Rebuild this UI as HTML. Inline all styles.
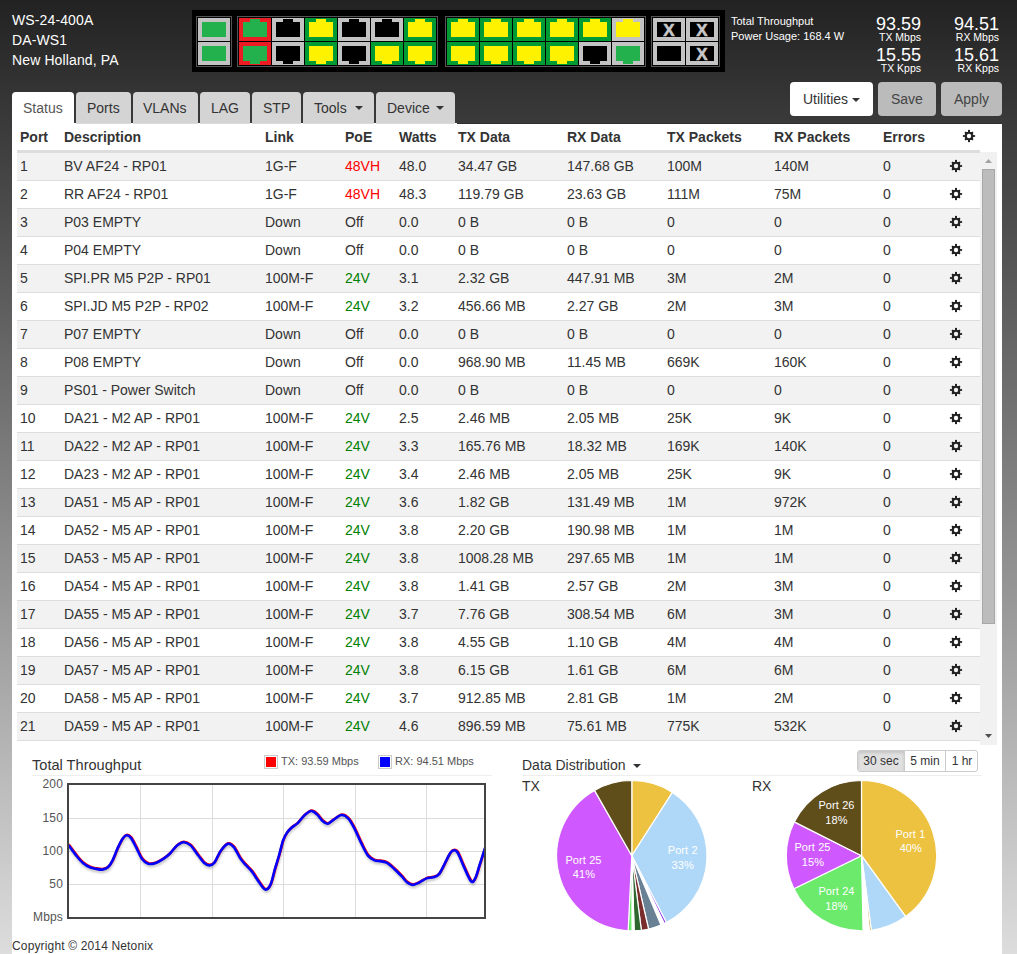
<!DOCTYPE html><html><head><meta charset="utf-8"><style>
html,body{margin:0;padding:0}
body{width:1017px;height:954px;overflow:hidden;position:relative;background:linear-gradient(#222 0%,#dddddd 100%);font-family:'Liberation Sans', sans-serif;}
.abs{position:absolute}
.th{position:absolute;font:bold 14px/20px 'Liberation Sans', sans-serif;color:#333;white-space:nowrap}
.td{position:absolute;font:14px/20px 'Liberation Sans', sans-serif;color:#333;white-space:nowrap}
.tab{position:absolute;top:92px;height:31px;background:#d4d4d4;border-radius:4px 4px 0 0;font:14px/20px 'Liberation Sans', sans-serif;color:#333;box-sizing:border-box;padding-top:6px;white-space:nowrap}
.btn{position:absolute;top:82px;height:34px;border-radius:4px;font:14px/20px 'Liberation Sans', sans-serif;box-sizing:border-box;padding-top:7px;white-space:nowrap}
</style></head><body>
<div class="abs" style="left:12px;top:10px;font:14px/20px 'Liberation Sans', sans-serif;color:#fff;letter-spacing:0.12px">WS-24-400A<br>DA-WS1<br>New Holland, PA</div><div style="position:absolute;left:192px;top:10px;width:533px;height:62px;background:#000"></div><div style="position:absolute;left:196px;top:16px;width:34px;height:49px;border:1px solid #555"></div><div style="position:absolute;left:237px;top:16px;width:199px;height:49px;border:1px solid #555"></div><div style="position:absolute;left:445px;top:16px;width:199px;height:49px;border:1px solid #555"></div><div style="position:absolute;left:651px;top:16px;width:67px;height:49px;border:1px solid #555"></div><div style="position:absolute;left:198px;top:18px;width:32px;height:23px;background:#c3c3c3"></div><div style="position:absolute;left:202px;top:22px;width:24px;height:15px;background:#22b14c"></div><div style="position:absolute;left:198px;top:42px;width:32px;height:23px;background:#c3c3c3"></div><div style="position:absolute;left:202px;top:46px;width:24px;height:15px;background:#22b14c"></div><div style="position:absolute;left:239px;top:18px;width:32px;height:23px;background:#ed1c24"></div><div style="position:absolute;left:243px;top:22px;width:24px;height:15px;background:#22b14c"></div><div style="position:absolute;left:250px;top:19px;width:10px;height:3px;background:#22b14c"></div><div style="position:absolute;left:239px;top:42px;width:32px;height:23px;background:#ed1c24"></div><div style="position:absolute;left:243px;top:46px;width:24px;height:15px;background:#22b14c"></div><div style="position:absolute;left:250px;top:61px;width:10px;height:3px;background:#22b14c"></div><div style="position:absolute;left:447px;top:18px;width:32px;height:23px;background:#009a34"></div><div style="position:absolute;left:451px;top:22px;width:24px;height:15px;background:#fff200"></div><div style="position:absolute;left:458px;top:19px;width:10px;height:3px;background:#fff200"></div><div style="position:absolute;left:447px;top:42px;width:32px;height:23px;background:#009a34"></div><div style="position:absolute;left:451px;top:46px;width:24px;height:15px;background:#fff200"></div><div style="position:absolute;left:458px;top:61px;width:10px;height:3px;background:#fff200"></div><div style="position:absolute;left:272px;top:18px;width:32px;height:23px;background:#c3c3c3"></div><div style="position:absolute;left:276px;top:22px;width:24px;height:15px;background:#000"></div><div style="position:absolute;left:283px;top:19px;width:10px;height:3px;background:#000"></div><div style="position:absolute;left:272px;top:42px;width:32px;height:23px;background:#c3c3c3"></div><div style="position:absolute;left:276px;top:46px;width:24px;height:15px;background:#000"></div><div style="position:absolute;left:283px;top:61px;width:10px;height:3px;background:#000"></div><div style="position:absolute;left:480px;top:18px;width:32px;height:23px;background:#009a34"></div><div style="position:absolute;left:484px;top:22px;width:24px;height:15px;background:#fff200"></div><div style="position:absolute;left:491px;top:19px;width:10px;height:3px;background:#fff200"></div><div style="position:absolute;left:480px;top:42px;width:32px;height:23px;background:#009a34"></div><div style="position:absolute;left:484px;top:46px;width:24px;height:15px;background:#fff200"></div><div style="position:absolute;left:491px;top:61px;width:10px;height:3px;background:#fff200"></div><div style="position:absolute;left:305px;top:18px;width:32px;height:23px;background:#009a34"></div><div style="position:absolute;left:309px;top:22px;width:24px;height:15px;background:#fff200"></div><div style="position:absolute;left:316px;top:19px;width:10px;height:3px;background:#fff200"></div><div style="position:absolute;left:305px;top:42px;width:32px;height:23px;background:#009a34"></div><div style="position:absolute;left:309px;top:46px;width:24px;height:15px;background:#fff200"></div><div style="position:absolute;left:316px;top:61px;width:10px;height:3px;background:#fff200"></div><div style="position:absolute;left:513px;top:18px;width:32px;height:23px;background:#009a34"></div><div style="position:absolute;left:517px;top:22px;width:24px;height:15px;background:#fff200"></div><div style="position:absolute;left:524px;top:19px;width:10px;height:3px;background:#fff200"></div><div style="position:absolute;left:513px;top:42px;width:32px;height:23px;background:#009a34"></div><div style="position:absolute;left:517px;top:46px;width:24px;height:15px;background:#fff200"></div><div style="position:absolute;left:524px;top:61px;width:10px;height:3px;background:#fff200"></div><div style="position:absolute;left:338px;top:18px;width:32px;height:23px;background:#c3c3c3"></div><div style="position:absolute;left:342px;top:22px;width:24px;height:15px;background:#000"></div><div style="position:absolute;left:349px;top:19px;width:10px;height:3px;background:#000"></div><div style="position:absolute;left:338px;top:42px;width:32px;height:23px;background:#c3c3c3"></div><div style="position:absolute;left:342px;top:46px;width:24px;height:15px;background:#000"></div><div style="position:absolute;left:349px;top:61px;width:10px;height:3px;background:#000"></div><div style="position:absolute;left:546px;top:18px;width:32px;height:23px;background:#009a34"></div><div style="position:absolute;left:550px;top:22px;width:24px;height:15px;background:#fff200"></div><div style="position:absolute;left:557px;top:19px;width:10px;height:3px;background:#fff200"></div><div style="position:absolute;left:546px;top:42px;width:32px;height:23px;background:#009a34"></div><div style="position:absolute;left:550px;top:46px;width:24px;height:15px;background:#fff200"></div><div style="position:absolute;left:557px;top:61px;width:10px;height:3px;background:#fff200"></div><div style="position:absolute;left:371px;top:18px;width:32px;height:23px;background:#c3c3c3"></div><div style="position:absolute;left:375px;top:22px;width:24px;height:15px;background:#000"></div><div style="position:absolute;left:382px;top:19px;width:10px;height:3px;background:#000"></div><div style="position:absolute;left:371px;top:42px;width:32px;height:23px;background:#009a34"></div><div style="position:absolute;left:375px;top:46px;width:24px;height:15px;background:#fff200"></div><div style="position:absolute;left:382px;top:61px;width:10px;height:3px;background:#fff200"></div><div style="position:absolute;left:579px;top:18px;width:32px;height:23px;background:#009a34"></div><div style="position:absolute;left:583px;top:22px;width:24px;height:15px;background:#fff200"></div><div style="position:absolute;left:590px;top:19px;width:10px;height:3px;background:#fff200"></div><div style="position:absolute;left:579px;top:42px;width:32px;height:23px;background:#c3c3c3"></div><div style="position:absolute;left:583px;top:46px;width:24px;height:15px;background:#000"></div><div style="position:absolute;left:590px;top:61px;width:10px;height:3px;background:#000"></div><div style="position:absolute;left:404px;top:18px;width:32px;height:23px;background:#009a34"></div><div style="position:absolute;left:408px;top:22px;width:24px;height:15px;background:#fff200"></div><div style="position:absolute;left:415px;top:19px;width:10px;height:3px;background:#fff200"></div><div style="position:absolute;left:404px;top:42px;width:32px;height:23px;background:#009a34"></div><div style="position:absolute;left:408px;top:46px;width:24px;height:15px;background:#fff200"></div><div style="position:absolute;left:415px;top:61px;width:10px;height:3px;background:#fff200"></div><div style="position:absolute;left:612px;top:18px;width:32px;height:23px;background:#c3c3c3"></div><div style="position:absolute;left:616px;top:22px;width:24px;height:15px;background:#fff200"></div><div style="position:absolute;left:623px;top:19px;width:10px;height:3px;background:#fff200"></div><div style="position:absolute;left:612px;top:42px;width:32px;height:23px;background:#c3c3c3"></div><div style="position:absolute;left:616px;top:46px;width:24px;height:15px;background:#22b14c"></div><div style="position:absolute;left:623px;top:61px;width:10px;height:3px;background:#22b14c"></div><div style="position:absolute;left:653px;top:18px;width:32px;height:23px;background:#c3c3c3"></div><div style="position:absolute;left:657px;top:22px;width:24px;height:15px;background:#000"></div><div style="position:absolute;left:653px;top:21.5px;width:32px;height:17px;line-height:17px;text-align:center;color:#c8c8c8;font:bold 17px/17px 'Liberation Sans', sans-serif;-webkit-text-stroke:0.5px #c8c8c8">X</div><div style="position:absolute;left:686px;top:18px;width:32px;height:23px;background:#c3c3c3"></div><div style="position:absolute;left:690px;top:22px;width:24px;height:15px;background:#000"></div><div style="position:absolute;left:686px;top:21.5px;width:32px;height:17px;line-height:17px;text-align:center;color:#c8c8c8;font:bold 17px/17px 'Liberation Sans', sans-serif;-webkit-text-stroke:0.5px #c8c8c8">X</div><div style="position:absolute;left:653px;top:42px;width:32px;height:23px;background:#c3c3c3"></div><div style="position:absolute;left:657px;top:46px;width:24px;height:15px;background:#000"></div><div style="position:absolute;left:686px;top:42px;width:32px;height:23px;background:#c3c3c3"></div><div style="position:absolute;left:690px;top:46px;width:24px;height:15px;background:#000"></div><div style="position:absolute;left:686px;top:45.5px;width:32px;height:17px;line-height:17px;text-align:center;color:#c8c8c8;font:bold 17px/17px 'Liberation Sans', sans-serif;-webkit-text-stroke:0.5px #c8c8c8">X</div><div class="abs" style="left:731px;top:14px;font:11px/15px 'Liberation Sans', sans-serif;color:#fff">Total Throughput<br>Power Usage: 168.4 W</div><div class="abs" style="left:841px;width:80px;top:14px;text-align:right;font:18px/20px 'Liberation Sans', sans-serif;color:#fff">93.59</div><div class="abs" style="left:841px;width:80px;top:31px;text-align:right;font:10.5px/13px 'Liberation Sans', sans-serif;color:#fff">TX Mbps</div><div class="abs" style="left:919px;width:80px;top:14px;text-align:right;font:18px/20px 'Liberation Sans', sans-serif;color:#fff">94.51</div><div class="abs" style="left:919px;width:80px;top:31px;text-align:right;font:10.5px/13px 'Liberation Sans', sans-serif;color:#fff">RX Mbps</div><div class="abs" style="left:841px;width:80px;top:45px;text-align:right;font:18px/20px 'Liberation Sans', sans-serif;color:#fff">15.55</div><div class="abs" style="left:841px;width:80px;top:62px;text-align:right;font:10.5px/13px 'Liberation Sans', sans-serif;color:#fff">TX Kpps</div><div class="abs" style="left:919px;width:80px;top:45px;text-align:right;font:18px/20px 'Liberation Sans', sans-serif;color:#fff">15.61</div><div class="abs" style="left:919px;width:80px;top:62px;text-align:right;font:10.5px/13px 'Liberation Sans', sans-serif;color:#fff">RX Kpps</div><div class="btn" style="left:790px;width:83px;background:#fff;color:#333;padding-left:13px">Utilities</div><div class="abs" style="left:852px;top:98px;width:0;height:0;border-left:4.0px solid transparent;border-right:4.0px solid transparent;border-top:4px solid #333"></div><div class="btn" style="left:878px;width:58px;background:#bbb;color:#444;padding-left:13px">Save</div><div class="btn" style="left:941px;width:61px;background:#bbb;color:#444;padding-left:13px">Apply</div><div class="abs" style="left:12px;top:124px;width:990px;height:830px;background:#fff"></div><div class="abs" style="left:457px;top:123px;width:545px;height:1px;background:#2e2e2e"></div><div class="abs" style="left:12px;top:123px;width:445px;height:1px;background:#fff"></div><div class="tab" style="left:12px;width:62px;padding-left:11px;background:#fff;color:#555;height:32px;">Status</div><div class="tab" style="left:76px;width:55px;padding-left:11px;box-shadow:inset 0 -1px 0 #dadada;height:32px;">Ports</div><div class="tab" style="left:133px;width:65px;padding-left:10px;box-shadow:inset 0 -1px 0 #dadada;height:32px;">VLANs</div><div class="tab" style="left:200px;width:50px;padding-left:11px;box-shadow:inset 0 -1px 0 #dadada;height:32px;">LAG</div><div class="tab" style="left:252px;width:49px;padding-left:11px;box-shadow:inset 0 -1px 0 #dadada;height:32px;">STP</div><div class="tab" style="left:303px;width:71px;padding-left:11px;box-shadow:inset 0 -1px 0 #dadada;height:32px;">Tools</div><div class="tab" style="left:376px;width:79px;padding-left:11px;box-shadow:inset 0 -1px 0 #dadada;height:32px;">Device</div><div class="abs" style="left:355px;top:106px;width:0;height:0;border-left:4.0px solid transparent;border-right:4.0px solid transparent;border-top:4px solid #333"></div><div class="abs" style="left:436px;top:106px;width:0;height:0;border-left:4.0px solid transparent;border-right:4.0px solid transparent;border-top:4px solid #333"></div><div class="th" style="left:20px;top:127px">Port</div><div class="th" style="left:64px;top:127px">Description</div><div class="th" style="left:265px;top:127px">Link</div><div class="th" style="left:345px;top:127px">PoE</div><div class="th" style="left:399px;top:127px">Watts</div><div class="th" style="left:458px;top:127px">TX Data</div><div class="th" style="left:567px;top:127px">RX Data</div><div class="th" style="left:667px;top:127px">TX Packets</div><div class="th" style="left:774px;top:127px">RX Packets</div><div class="th" style="left:883px;top:127px">Errors</div><svg style="position:absolute;left:0;top:0" width="1017" height="954"><g fill="#222"><rect x="964.90" y="132.10" width="8.2" height="7.8" rx="0.8"/><rect x="968.00" y="129.90" width="2" height="12.2"/><rect x="962.90" y="135.10" width="12.2" height="1.8"/><rect x="968.20" y="130.40" width="1.6" height="11.2" transform="rotate(45 969 136)"/><rect x="968.20" y="130.40" width="1.6" height="11.2" transform="rotate(135 969 136)"/></g><circle cx="969" cy="136" r="2.2" fill="#fff"/></svg><div style="position:absolute;left:17px;top:150px;width:963px;height:3px;background:#ddd"></div><div style="position:absolute;left:17px;top:153px;width:963px;height:592px;overflow:hidden"><div style="position:absolute;left:0;top:0px;width:963px;height:27px;background:#f2f2f2;border-bottom:1px solid #ddd"></div><div class="td" style="left:3px;top:3px;">1</div><div class="td" style="left:47px;top:3px;">BV AF24 - RP01</div><div class="td" style="left:248px;top:3px;">1G-F</div><div class="td" style="left:328px;top:3px;color:#f00;">48VH</div><div class="td" style="left:382px;top:3px;">48.0</div><div class="td" style="left:441px;top:3px;">34.47 GB</div><div class="td" style="left:550px;top:3px;">147.68 GB</div><div class="td" style="left:650px;top:3px;">100M</div><div class="td" style="left:757px;top:3px;">140M</div><div class="td" style="left:866px;top:3px;">0</div><div style="position:absolute;left:0;top:28px;width:963px;height:27px;background:#fff;border-bottom:1px solid #ddd"></div><div class="td" style="left:3px;top:31px;">2</div><div class="td" style="left:47px;top:31px;">RR AF24 - RP01</div><div class="td" style="left:248px;top:31px;">1G-F</div><div class="td" style="left:328px;top:31px;color:#f00;">48VH</div><div class="td" style="left:382px;top:31px;">48.3</div><div class="td" style="left:441px;top:31px;">119.79 GB</div><div class="td" style="left:550px;top:31px;">23.63 GB</div><div class="td" style="left:650px;top:31px;">111M</div><div class="td" style="left:757px;top:31px;">75M</div><div class="td" style="left:866px;top:31px;">0</div><div style="position:absolute;left:0;top:56px;width:963px;height:27px;background:#f2f2f2;border-bottom:1px solid #ddd"></div><div class="td" style="left:3px;top:59px;">3</div><div class="td" style="left:47px;top:59px;">P03 EMPTY</div><div class="td" style="left:248px;top:59px;">Down</div><div class="td" style="left:328px;top:59px;">Off</div><div class="td" style="left:382px;top:59px;">0.0</div><div class="td" style="left:441px;top:59px;">0 B</div><div class="td" style="left:550px;top:59px;">0 B</div><div class="td" style="left:650px;top:59px;">0</div><div class="td" style="left:757px;top:59px;">0</div><div class="td" style="left:866px;top:59px;">0</div><div style="position:absolute;left:0;top:84px;width:963px;height:27px;background:#fff;border-bottom:1px solid #ddd"></div><div class="td" style="left:3px;top:87px;">4</div><div class="td" style="left:47px;top:87px;">P04 EMPTY</div><div class="td" style="left:248px;top:87px;">Down</div><div class="td" style="left:328px;top:87px;">Off</div><div class="td" style="left:382px;top:87px;">0.0</div><div class="td" style="left:441px;top:87px;">0 B</div><div class="td" style="left:550px;top:87px;">0 B</div><div class="td" style="left:650px;top:87px;">0</div><div class="td" style="left:757px;top:87px;">0</div><div class="td" style="left:866px;top:87px;">0</div><div style="position:absolute;left:0;top:112px;width:963px;height:27px;background:#f2f2f2;border-bottom:1px solid #ddd"></div><div class="td" style="left:3px;top:115px;">5</div><div class="td" style="left:47px;top:115px;">SPI.PR M5 P2P - RP01</div><div class="td" style="left:248px;top:115px;">100M-F</div><div class="td" style="left:328px;top:115px;color:#008000;">24V</div><div class="td" style="left:382px;top:115px;">3.1</div><div class="td" style="left:441px;top:115px;">2.32 GB</div><div class="td" style="left:550px;top:115px;">447.91 MB</div><div class="td" style="left:650px;top:115px;">3M</div><div class="td" style="left:757px;top:115px;">2M</div><div class="td" style="left:866px;top:115px;">0</div><div style="position:absolute;left:0;top:140px;width:963px;height:27px;background:#fff;border-bottom:1px solid #ddd"></div><div class="td" style="left:3px;top:143px;">6</div><div class="td" style="left:47px;top:143px;">SPI.JD M5 P2P - RP02</div><div class="td" style="left:248px;top:143px;">100M-F</div><div class="td" style="left:328px;top:143px;color:#008000;">24V</div><div class="td" style="left:382px;top:143px;">3.2</div><div class="td" style="left:441px;top:143px;">456.66 MB</div><div class="td" style="left:550px;top:143px;">2.27 GB</div><div class="td" style="left:650px;top:143px;">2M</div><div class="td" style="left:757px;top:143px;">3M</div><div class="td" style="left:866px;top:143px;">0</div><div style="position:absolute;left:0;top:168px;width:963px;height:27px;background:#f2f2f2;border-bottom:1px solid #ddd"></div><div class="td" style="left:3px;top:171px;">7</div><div class="td" style="left:47px;top:171px;">P07 EMPTY</div><div class="td" style="left:248px;top:171px;">Down</div><div class="td" style="left:328px;top:171px;">Off</div><div class="td" style="left:382px;top:171px;">0.0</div><div class="td" style="left:441px;top:171px;">0 B</div><div class="td" style="left:550px;top:171px;">0 B</div><div class="td" style="left:650px;top:171px;">0</div><div class="td" style="left:757px;top:171px;">0</div><div class="td" style="left:866px;top:171px;">0</div><div style="position:absolute;left:0;top:196px;width:963px;height:27px;background:#fff;border-bottom:1px solid #ddd"></div><div class="td" style="left:3px;top:199px;">8</div><div class="td" style="left:47px;top:199px;">P08 EMPTY</div><div class="td" style="left:248px;top:199px;">Down</div><div class="td" style="left:328px;top:199px;">Off</div><div class="td" style="left:382px;top:199px;">0.0</div><div class="td" style="left:441px;top:199px;">968.90 MB</div><div class="td" style="left:550px;top:199px;">11.45 MB</div><div class="td" style="left:650px;top:199px;">669K</div><div class="td" style="left:757px;top:199px;">160K</div><div class="td" style="left:866px;top:199px;">0</div><div style="position:absolute;left:0;top:224px;width:963px;height:27px;background:#f2f2f2;border-bottom:1px solid #ddd"></div><div class="td" style="left:3px;top:227px;">9</div><div class="td" style="left:47px;top:227px;">PS01 - Power Switch</div><div class="td" style="left:248px;top:227px;">Down</div><div class="td" style="left:328px;top:227px;">Off</div><div class="td" style="left:382px;top:227px;">0.0</div><div class="td" style="left:441px;top:227px;">0 B</div><div class="td" style="left:550px;top:227px;">0 B</div><div class="td" style="left:650px;top:227px;">0</div><div class="td" style="left:757px;top:227px;">0</div><div class="td" style="left:866px;top:227px;">0</div><div style="position:absolute;left:0;top:252px;width:963px;height:27px;background:#fff;border-bottom:1px solid #ddd"></div><div class="td" style="left:3px;top:255px;">10</div><div class="td" style="left:47px;top:255px;">DA21 - M2 AP - RP01</div><div class="td" style="left:248px;top:255px;">100M-F</div><div class="td" style="left:328px;top:255px;color:#008000;">24V</div><div class="td" style="left:382px;top:255px;">2.5</div><div class="td" style="left:441px;top:255px;">2.46 MB</div><div class="td" style="left:550px;top:255px;">2.05 MB</div><div class="td" style="left:650px;top:255px;">25K</div><div class="td" style="left:757px;top:255px;">9K</div><div class="td" style="left:866px;top:255px;">0</div><div style="position:absolute;left:0;top:280px;width:963px;height:27px;background:#f2f2f2;border-bottom:1px solid #ddd"></div><div class="td" style="left:3px;top:283px;">11</div><div class="td" style="left:47px;top:283px;">DA22 - M2 AP - RP01</div><div class="td" style="left:248px;top:283px;">100M-F</div><div class="td" style="left:328px;top:283px;color:#008000;">24V</div><div class="td" style="left:382px;top:283px;">3.3</div><div class="td" style="left:441px;top:283px;">165.76 MB</div><div class="td" style="left:550px;top:283px;">18.32 MB</div><div class="td" style="left:650px;top:283px;">169K</div><div class="td" style="left:757px;top:283px;">140K</div><div class="td" style="left:866px;top:283px;">0</div><div style="position:absolute;left:0;top:308px;width:963px;height:27px;background:#fff;border-bottom:1px solid #ddd"></div><div class="td" style="left:3px;top:311px;">12</div><div class="td" style="left:47px;top:311px;">DA23 - M2 AP - RP01</div><div class="td" style="left:248px;top:311px;">100M-F</div><div class="td" style="left:328px;top:311px;color:#008000;">24V</div><div class="td" style="left:382px;top:311px;">3.4</div><div class="td" style="left:441px;top:311px;">2.46 MB</div><div class="td" style="left:550px;top:311px;">2.05 MB</div><div class="td" style="left:650px;top:311px;">25K</div><div class="td" style="left:757px;top:311px;">9K</div><div class="td" style="left:866px;top:311px;">0</div><div style="position:absolute;left:0;top:336px;width:963px;height:27px;background:#f2f2f2;border-bottom:1px solid #ddd"></div><div class="td" style="left:3px;top:339px;">13</div><div class="td" style="left:47px;top:339px;">DA51 - M5 AP - RP01</div><div class="td" style="left:248px;top:339px;">100M-F</div><div class="td" style="left:328px;top:339px;color:#008000;">24V</div><div class="td" style="left:382px;top:339px;">3.6</div><div class="td" style="left:441px;top:339px;">1.82 GB</div><div class="td" style="left:550px;top:339px;">131.49 MB</div><div class="td" style="left:650px;top:339px;">1M</div><div class="td" style="left:757px;top:339px;">972K</div><div class="td" style="left:866px;top:339px;">0</div><div style="position:absolute;left:0;top:364px;width:963px;height:27px;background:#fff;border-bottom:1px solid #ddd"></div><div class="td" style="left:3px;top:367px;">14</div><div class="td" style="left:47px;top:367px;">DA52 - M5 AP - RP01</div><div class="td" style="left:248px;top:367px;">100M-F</div><div class="td" style="left:328px;top:367px;color:#008000;">24V</div><div class="td" style="left:382px;top:367px;">3.8</div><div class="td" style="left:441px;top:367px;">2.20 GB</div><div class="td" style="left:550px;top:367px;">190.98 MB</div><div class="td" style="left:650px;top:367px;">1M</div><div class="td" style="left:757px;top:367px;">1M</div><div class="td" style="left:866px;top:367px;">0</div><div style="position:absolute;left:0;top:392px;width:963px;height:27px;background:#f2f2f2;border-bottom:1px solid #ddd"></div><div class="td" style="left:3px;top:395px;">15</div><div class="td" style="left:47px;top:395px;">DA53 - M5 AP - RP01</div><div class="td" style="left:248px;top:395px;">100M-F</div><div class="td" style="left:328px;top:395px;color:#008000;">24V</div><div class="td" style="left:382px;top:395px;">3.8</div><div class="td" style="left:441px;top:395px;">1008.28 MB</div><div class="td" style="left:550px;top:395px;">297.65 MB</div><div class="td" style="left:650px;top:395px;">1M</div><div class="td" style="left:757px;top:395px;">1M</div><div class="td" style="left:866px;top:395px;">0</div><div style="position:absolute;left:0;top:420px;width:963px;height:27px;background:#fff;border-bottom:1px solid #ddd"></div><div class="td" style="left:3px;top:423px;">16</div><div class="td" style="left:47px;top:423px;">DA54 - M5 AP - RP01</div><div class="td" style="left:248px;top:423px;">100M-F</div><div class="td" style="left:328px;top:423px;color:#008000;">24V</div><div class="td" style="left:382px;top:423px;">3.8</div><div class="td" style="left:441px;top:423px;">1.41 GB</div><div class="td" style="left:550px;top:423px;">2.57 GB</div><div class="td" style="left:650px;top:423px;">2M</div><div class="td" style="left:757px;top:423px;">3M</div><div class="td" style="left:866px;top:423px;">0</div><div style="position:absolute;left:0;top:448px;width:963px;height:27px;background:#f2f2f2;border-bottom:1px solid #ddd"></div><div class="td" style="left:3px;top:451px;">17</div><div class="td" style="left:47px;top:451px;">DA55 - M5 AP - RP01</div><div class="td" style="left:248px;top:451px;">100M-F</div><div class="td" style="left:328px;top:451px;color:#008000;">24V</div><div class="td" style="left:382px;top:451px;">3.7</div><div class="td" style="left:441px;top:451px;">7.76 GB</div><div class="td" style="left:550px;top:451px;">308.54 MB</div><div class="td" style="left:650px;top:451px;">6M</div><div class="td" style="left:757px;top:451px;">3M</div><div class="td" style="left:866px;top:451px;">0</div><div style="position:absolute;left:0;top:476px;width:963px;height:27px;background:#fff;border-bottom:1px solid #ddd"></div><div class="td" style="left:3px;top:479px;">18</div><div class="td" style="left:47px;top:479px;">DA56 - M5 AP - RP01</div><div class="td" style="left:248px;top:479px;">100M-F</div><div class="td" style="left:328px;top:479px;color:#008000;">24V</div><div class="td" style="left:382px;top:479px;">3.8</div><div class="td" style="left:441px;top:479px;">4.55 GB</div><div class="td" style="left:550px;top:479px;">1.10 GB</div><div class="td" style="left:650px;top:479px;">4M</div><div class="td" style="left:757px;top:479px;">4M</div><div class="td" style="left:866px;top:479px;">0</div><div style="position:absolute;left:0;top:504px;width:963px;height:27px;background:#f2f2f2;border-bottom:1px solid #ddd"></div><div class="td" style="left:3px;top:507px;">19</div><div class="td" style="left:47px;top:507px;">DA57 - M5 AP - RP01</div><div class="td" style="left:248px;top:507px;">100M-F</div><div class="td" style="left:328px;top:507px;color:#008000;">24V</div><div class="td" style="left:382px;top:507px;">3.8</div><div class="td" style="left:441px;top:507px;">6.15 GB</div><div class="td" style="left:550px;top:507px;">1.61 GB</div><div class="td" style="left:650px;top:507px;">6M</div><div class="td" style="left:757px;top:507px;">6M</div><div class="td" style="left:866px;top:507px;">0</div><div style="position:absolute;left:0;top:532px;width:963px;height:27px;background:#fff;border-bottom:1px solid #ddd"></div><div class="td" style="left:3px;top:535px;">20</div><div class="td" style="left:47px;top:535px;">DA58 - M5 AP - RP01</div><div class="td" style="left:248px;top:535px;">100M-F</div><div class="td" style="left:328px;top:535px;color:#008000;">24V</div><div class="td" style="left:382px;top:535px;">3.7</div><div class="td" style="left:441px;top:535px;">912.85 MB</div><div class="td" style="left:550px;top:535px;">2.81 GB</div><div class="td" style="left:650px;top:535px;">1M</div><div class="td" style="left:757px;top:535px;">2M</div><div class="td" style="left:866px;top:535px;">0</div><div style="position:absolute;left:0;top:560px;width:963px;height:27px;background:#f2f2f2;border-bottom:1px solid #ddd"></div><div class="td" style="left:3px;top:563px;">21</div><div class="td" style="left:47px;top:563px;">DA59 - M5 AP - RP01</div><div class="td" style="left:248px;top:563px;">100M-F</div><div class="td" style="left:328px;top:563px;color:#008000;">24V</div><div class="td" style="left:382px;top:563px;">4.6</div><div class="td" style="left:441px;top:563px;">896.59 MB</div><div class="td" style="left:550px;top:563px;">75.61 MB</div><div class="td" style="left:650px;top:563px;">775K</div><div class="td" style="left:757px;top:563px;">532K</div><div class="td" style="left:866px;top:563px;">0</div><svg style="position:absolute;left:0;top:0" width="963" height="592"><g fill="#222"><rect x="934.90" y="9.10" width="8.2" height="7.8" rx="0.8"/><rect x="938.00" y="6.90" width="2" height="12.2"/><rect x="932.90" y="12.10" width="12.2" height="1.8"/><rect x="938.20" y="7.40" width="1.6" height="11.2" transform="rotate(45 939 13)"/><rect x="938.20" y="7.40" width="1.6" height="11.2" transform="rotate(135 939 13)"/></g><circle cx="939" cy="13" r="2.2" fill="#f2f2f2"/><g fill="#222"><rect x="934.90" y="37.10" width="8.2" height="7.8" rx="0.8"/><rect x="938.00" y="34.90" width="2" height="12.2"/><rect x="932.90" y="40.10" width="12.2" height="1.8"/><rect x="938.20" y="35.40" width="1.6" height="11.2" transform="rotate(45 939 41)"/><rect x="938.20" y="35.40" width="1.6" height="11.2" transform="rotate(135 939 41)"/></g><circle cx="939" cy="41" r="2.2" fill="#fff"/><g fill="#222"><rect x="934.90" y="65.10" width="8.2" height="7.8" rx="0.8"/><rect x="938.00" y="62.90" width="2" height="12.2"/><rect x="932.90" y="68.10" width="12.2" height="1.8"/><rect x="938.20" y="63.40" width="1.6" height="11.2" transform="rotate(45 939 69)"/><rect x="938.20" y="63.40" width="1.6" height="11.2" transform="rotate(135 939 69)"/></g><circle cx="939" cy="69" r="2.2" fill="#f2f2f2"/><g fill="#222"><rect x="934.90" y="93.10" width="8.2" height="7.8" rx="0.8"/><rect x="938.00" y="90.90" width="2" height="12.2"/><rect x="932.90" y="96.10" width="12.2" height="1.8"/><rect x="938.20" y="91.40" width="1.6" height="11.2" transform="rotate(45 939 97)"/><rect x="938.20" y="91.40" width="1.6" height="11.2" transform="rotate(135 939 97)"/></g><circle cx="939" cy="97" r="2.2" fill="#fff"/><g fill="#222"><rect x="934.90" y="121.10" width="8.2" height="7.8" rx="0.8"/><rect x="938.00" y="118.90" width="2" height="12.2"/><rect x="932.90" y="124.10" width="12.2" height="1.8"/><rect x="938.20" y="119.40" width="1.6" height="11.2" transform="rotate(45 939 125)"/><rect x="938.20" y="119.40" width="1.6" height="11.2" transform="rotate(135 939 125)"/></g><circle cx="939" cy="125" r="2.2" fill="#f2f2f2"/><g fill="#222"><rect x="934.90" y="149.10" width="8.2" height="7.8" rx="0.8"/><rect x="938.00" y="146.90" width="2" height="12.2"/><rect x="932.90" y="152.10" width="12.2" height="1.8"/><rect x="938.20" y="147.40" width="1.6" height="11.2" transform="rotate(45 939 153)"/><rect x="938.20" y="147.40" width="1.6" height="11.2" transform="rotate(135 939 153)"/></g><circle cx="939" cy="153" r="2.2" fill="#fff"/><g fill="#222"><rect x="934.90" y="177.10" width="8.2" height="7.8" rx="0.8"/><rect x="938.00" y="174.90" width="2" height="12.2"/><rect x="932.90" y="180.10" width="12.2" height="1.8"/><rect x="938.20" y="175.40" width="1.6" height="11.2" transform="rotate(45 939 181)"/><rect x="938.20" y="175.40" width="1.6" height="11.2" transform="rotate(135 939 181)"/></g><circle cx="939" cy="181" r="2.2" fill="#f2f2f2"/><g fill="#222"><rect x="934.90" y="205.10" width="8.2" height="7.8" rx="0.8"/><rect x="938.00" y="202.90" width="2" height="12.2"/><rect x="932.90" y="208.10" width="12.2" height="1.8"/><rect x="938.20" y="203.40" width="1.6" height="11.2" transform="rotate(45 939 209)"/><rect x="938.20" y="203.40" width="1.6" height="11.2" transform="rotate(135 939 209)"/></g><circle cx="939" cy="209" r="2.2" fill="#fff"/><g fill="#222"><rect x="934.90" y="233.10" width="8.2" height="7.8" rx="0.8"/><rect x="938.00" y="230.90" width="2" height="12.2"/><rect x="932.90" y="236.10" width="12.2" height="1.8"/><rect x="938.20" y="231.40" width="1.6" height="11.2" transform="rotate(45 939 237)"/><rect x="938.20" y="231.40" width="1.6" height="11.2" transform="rotate(135 939 237)"/></g><circle cx="939" cy="237" r="2.2" fill="#f2f2f2"/><g fill="#222"><rect x="934.90" y="261.10" width="8.2" height="7.8" rx="0.8"/><rect x="938.00" y="258.90" width="2" height="12.2"/><rect x="932.90" y="264.10" width="12.2" height="1.8"/><rect x="938.20" y="259.40" width="1.6" height="11.2" transform="rotate(45 939 265)"/><rect x="938.20" y="259.40" width="1.6" height="11.2" transform="rotate(135 939 265)"/></g><circle cx="939" cy="265" r="2.2" fill="#fff"/><g fill="#222"><rect x="934.90" y="289.10" width="8.2" height="7.8" rx="0.8"/><rect x="938.00" y="286.90" width="2" height="12.2"/><rect x="932.90" y="292.10" width="12.2" height="1.8"/><rect x="938.20" y="287.40" width="1.6" height="11.2" transform="rotate(45 939 293)"/><rect x="938.20" y="287.40" width="1.6" height="11.2" transform="rotate(135 939 293)"/></g><circle cx="939" cy="293" r="2.2" fill="#f2f2f2"/><g fill="#222"><rect x="934.90" y="317.10" width="8.2" height="7.8" rx="0.8"/><rect x="938.00" y="314.90" width="2" height="12.2"/><rect x="932.90" y="320.10" width="12.2" height="1.8"/><rect x="938.20" y="315.40" width="1.6" height="11.2" transform="rotate(45 939 321)"/><rect x="938.20" y="315.40" width="1.6" height="11.2" transform="rotate(135 939 321)"/></g><circle cx="939" cy="321" r="2.2" fill="#fff"/><g fill="#222"><rect x="934.90" y="345.10" width="8.2" height="7.8" rx="0.8"/><rect x="938.00" y="342.90" width="2" height="12.2"/><rect x="932.90" y="348.10" width="12.2" height="1.8"/><rect x="938.20" y="343.40" width="1.6" height="11.2" transform="rotate(45 939 349)"/><rect x="938.20" y="343.40" width="1.6" height="11.2" transform="rotate(135 939 349)"/></g><circle cx="939" cy="349" r="2.2" fill="#f2f2f2"/><g fill="#222"><rect x="934.90" y="373.10" width="8.2" height="7.8" rx="0.8"/><rect x="938.00" y="370.90" width="2" height="12.2"/><rect x="932.90" y="376.10" width="12.2" height="1.8"/><rect x="938.20" y="371.40" width="1.6" height="11.2" transform="rotate(45 939 377)"/><rect x="938.20" y="371.40" width="1.6" height="11.2" transform="rotate(135 939 377)"/></g><circle cx="939" cy="377" r="2.2" fill="#fff"/><g fill="#222"><rect x="934.90" y="401.10" width="8.2" height="7.8" rx="0.8"/><rect x="938.00" y="398.90" width="2" height="12.2"/><rect x="932.90" y="404.10" width="12.2" height="1.8"/><rect x="938.20" y="399.40" width="1.6" height="11.2" transform="rotate(45 939 405)"/><rect x="938.20" y="399.40" width="1.6" height="11.2" transform="rotate(135 939 405)"/></g><circle cx="939" cy="405" r="2.2" fill="#f2f2f2"/><g fill="#222"><rect x="934.90" y="429.10" width="8.2" height="7.8" rx="0.8"/><rect x="938.00" y="426.90" width="2" height="12.2"/><rect x="932.90" y="432.10" width="12.2" height="1.8"/><rect x="938.20" y="427.40" width="1.6" height="11.2" transform="rotate(45 939 433)"/><rect x="938.20" y="427.40" width="1.6" height="11.2" transform="rotate(135 939 433)"/></g><circle cx="939" cy="433" r="2.2" fill="#fff"/><g fill="#222"><rect x="934.90" y="457.10" width="8.2" height="7.8" rx="0.8"/><rect x="938.00" y="454.90" width="2" height="12.2"/><rect x="932.90" y="460.10" width="12.2" height="1.8"/><rect x="938.20" y="455.40" width="1.6" height="11.2" transform="rotate(45 939 461)"/><rect x="938.20" y="455.40" width="1.6" height="11.2" transform="rotate(135 939 461)"/></g><circle cx="939" cy="461" r="2.2" fill="#f2f2f2"/><g fill="#222"><rect x="934.90" y="485.10" width="8.2" height="7.8" rx="0.8"/><rect x="938.00" y="482.90" width="2" height="12.2"/><rect x="932.90" y="488.10" width="12.2" height="1.8"/><rect x="938.20" y="483.40" width="1.6" height="11.2" transform="rotate(45 939 489)"/><rect x="938.20" y="483.40" width="1.6" height="11.2" transform="rotate(135 939 489)"/></g><circle cx="939" cy="489" r="2.2" fill="#fff"/><g fill="#222"><rect x="934.90" y="513.10" width="8.2" height="7.8" rx="0.8"/><rect x="938.00" y="510.90" width="2" height="12.2"/><rect x="932.90" y="516.10" width="12.2" height="1.8"/><rect x="938.20" y="511.40" width="1.6" height="11.2" transform="rotate(45 939 517)"/><rect x="938.20" y="511.40" width="1.6" height="11.2" transform="rotate(135 939 517)"/></g><circle cx="939" cy="517" r="2.2" fill="#f2f2f2"/><g fill="#222"><rect x="934.90" y="541.10" width="8.2" height="7.8" rx="0.8"/><rect x="938.00" y="538.90" width="2" height="12.2"/><rect x="932.90" y="544.10" width="12.2" height="1.8"/><rect x="938.20" y="539.40" width="1.6" height="11.2" transform="rotate(45 939 545)"/><rect x="938.20" y="539.40" width="1.6" height="11.2" transform="rotate(135 939 545)"/></g><circle cx="939" cy="545" r="2.2" fill="#fff"/><g fill="#222"><rect x="934.90" y="569.10" width="8.2" height="7.8" rx="0.8"/><rect x="938.00" y="566.90" width="2" height="12.2"/><rect x="932.90" y="572.10" width="12.2" height="1.8"/><rect x="938.20" y="567.40" width="1.6" height="11.2" transform="rotate(45 939 573)"/><rect x="938.20" y="567.40" width="1.6" height="11.2" transform="rotate(135 939 573)"/></g><circle cx="939" cy="573" r="2.2" fill="#f2f2f2"/></svg></div><div style="position:absolute;left:980px;top:152px;width:17px;height:593px;background:#f1f1f1"></div><div style="position:absolute;left:982px;top:169px;width:11px;height:453px;background:#bcbcbc;border:1px solid #a8a8a8"></div><svg style="position:absolute;left:980px;top:152px" width="17" height="593"><path d="M5,11 L12,11 L8.5,7 Z" fill="#a3a3a3"/><path d="M5,582 L12,582 L8.5,586 Z" fill="#505050"/></svg><div class="abs" style="left:32px;top:755px;font:14.6px/20px 'Liberation Sans', sans-serif;color:#333">Total Throughput</div><div class="abs" style="left:32px;top:775px;width:460px;height:1px;background:#eee"></div><div class="abs" style="left:264px;top:755px;width:12px;height:12px;border:1px solid #ccc;padding:0"><div style="margin:1px;width:10px;height:10px;background:#f00"></div></div><div class="abs" style="left:378px;top:755px;width:12px;height:12px;border:1px solid #ccc;padding:0"><div style="margin:1px;width:10px;height:10px;background:#00f"></div></div><div class="abs" style="left:281px;top:754px;font:11px/15px 'Liberation Sans', sans-serif;color:#545454">TX: 93.59 Mbps</div><div class="abs" style="left:395px;top:754px;font:11px/15px 'Liberation Sans', sans-serif;color:#545454">RX: 94.51 Mbps</div><svg style="position:absolute;left:0;top:0" width="1017" height="954"><line x1="69" y1="818.5" x2="485" y2="818.5" stroke="#dcdcdc" stroke-width="1"/><line x1="69" y1="851.5" x2="485" y2="851.5" stroke="#dcdcdc" stroke-width="1"/><line x1="69" y1="884.5" x2="485" y2="884.5" stroke="#dcdcdc" stroke-width="1"/><line x1="140.5" y1="785" x2="140.5" y2="917" stroke="#dcdcdc" stroke-width="1"/><line x1="212.5" y1="785" x2="212.5" y2="917" stroke="#dcdcdc" stroke-width="1"/><line x1="283.5" y1="785" x2="283.5" y2="917" stroke="#dcdcdc" stroke-width="1"/><line x1="355.5" y1="785" x2="355.5" y2="917" stroke="#dcdcdc" stroke-width="1"/><line x1="426.5" y1="785" x2="426.5" y2="917" stroke="#dcdcdc" stroke-width="1"/><defs><clipPath id="cp"><rect x="69" y="785" width="415" height="132"/></clipPath><filter id="bl" x="-5%" y="-5%" width="110%" height="110%"><feGaussianBlur stdDeviation="0.8"/></filter></defs><g clip-path="url(#cp)"><path d="M68.50,845.50 C68.62,845.58 67.82,844.22 69.20,846.00 C70.58,847.78 74.45,853.32 76.80,856.20 C79.15,859.08 81.13,861.45 83.30,863.30 C85.47,865.15 87.63,866.37 89.80,867.30 C91.97,868.23 94.23,868.52 96.30,868.90 C98.37,869.28 100.32,869.82 102.20,869.60 C104.08,869.38 105.88,869.10 107.60,867.60 C109.32,866.10 110.78,863.93 112.50,860.60 C114.22,857.27 116.18,851.30 117.90,847.60 C119.62,843.90 121.35,840.47 122.80,838.40 C124.25,836.33 125.25,835.28 126.60,835.20 C127.95,835.12 129.28,835.83 130.90,837.90 C132.52,839.97 134.50,844.18 136.30,847.60 C138.10,851.02 139.72,855.70 141.70,858.40 C143.68,861.10 145.85,863.05 148.20,863.80 C150.55,864.55 153.28,863.72 155.80,862.90 C158.32,862.08 160.93,860.47 163.30,858.90 C165.67,857.33 167.80,855.65 170.00,853.50 C172.20,851.35 174.25,847.88 176.50,846.00 C178.75,844.12 181.15,842.30 183.50,842.20 C185.85,842.10 188.17,843.23 190.60,845.40 C193.03,847.57 195.77,852.22 198.10,855.20 C200.43,858.18 202.70,861.60 204.60,863.30 C206.50,865.00 207.88,865.50 209.50,865.40 C211.12,865.30 212.42,865.13 214.30,862.70 C216.18,860.27 218.53,853.95 220.80,850.80 C223.07,847.65 225.73,844.42 227.90,843.80 C230.07,843.18 231.73,844.67 233.80,847.10 C235.87,849.53 238.32,855.43 240.30,858.40 C242.28,861.37 243.72,862.65 245.70,864.90 C247.68,867.15 249.85,868.83 252.20,871.90 C254.55,874.97 257.55,880.35 259.80,883.30 C262.05,886.25 263.90,889.42 265.70,889.60 C267.50,889.78 269.07,887.80 270.60,884.40 C272.13,881.00 273.45,874.18 274.90,869.20 C276.35,864.22 277.93,859.30 279.30,854.50 C280.67,849.70 281.83,844.00 283.10,840.40 C284.37,836.80 285.55,834.97 286.90,832.90 C288.25,830.83 289.40,829.63 291.20,828.00 C293.00,826.37 295.53,825.17 297.70,823.10 C299.87,821.03 301.95,817.62 304.20,815.60 C306.45,813.58 309.03,811.18 311.20,811.00 C313.37,810.82 315.30,812.83 317.20,814.50 C319.10,816.17 320.88,819.47 322.60,821.00 C324.32,822.53 325.70,823.88 327.50,823.70 C329.30,823.52 331.07,821.35 333.40,819.90 C335.73,818.45 338.97,815.18 341.50,815.00 C344.03,814.82 346.35,816.37 348.60,818.80 C350.85,821.23 352.85,825.45 355.00,829.60 C357.15,833.75 359.33,839.37 361.50,843.70 C363.67,848.03 365.83,852.82 368.00,855.60 C370.17,858.38 372.50,859.48 374.50,860.40 C376.50,861.32 378.00,860.72 380.00,861.10 C382.00,861.48 384.15,861.43 386.50,862.70 C388.85,863.97 391.58,866.45 394.10,868.70 C396.62,870.95 399.45,873.95 401.60,876.20 C403.75,878.45 405.20,880.75 407.00,882.20 C408.80,883.65 410.42,884.82 412.40,884.90 C414.38,884.98 416.55,883.78 418.90,882.70 C421.25,881.62 424.15,879.30 426.50,878.40 C428.85,877.50 430.92,878.02 433.00,877.30 C435.08,876.58 437.02,876.43 439.00,874.10 C440.98,871.77 443.02,866.82 444.90,863.30 C446.78,859.78 448.77,855.17 450.30,853.00 C451.83,850.83 452.83,850.30 454.10,850.30 C455.37,850.30 456.37,850.48 457.90,853.00 C459.43,855.52 461.13,860.72 463.30,865.40 C465.47,870.08 468.92,878.93 470.90,881.10 C472.88,883.27 473.77,881.02 475.20,878.40 C476.63,875.78 478.07,869.82 479.50,865.40 C480.93,860.98 482.88,854.80 483.80,851.90 C484.72,849.00 484.80,848.65 485.00,848.00" transform="translate(0.5,2)" fill="none" stroke="rgba(0,0,0,0.22)" stroke-width="3" filter="url(#bl)"/><path d="M68.50,845.50 C68.62,845.58 67.82,844.22 69.20,846.00 C70.58,847.78 74.45,853.32 76.80,856.20 C79.15,859.08 81.13,861.45 83.30,863.30 C85.47,865.15 87.63,866.37 89.80,867.30 C91.97,868.23 94.23,868.52 96.30,868.90 C98.37,869.28 100.32,869.82 102.20,869.60 C104.08,869.38 105.88,869.10 107.60,867.60 C109.32,866.10 110.78,863.93 112.50,860.60 C114.22,857.27 116.18,851.30 117.90,847.60 C119.62,843.90 121.35,840.47 122.80,838.40 C124.25,836.33 125.25,835.28 126.60,835.20 C127.95,835.12 129.28,835.83 130.90,837.90 C132.52,839.97 134.50,844.18 136.30,847.60 C138.10,851.02 139.72,855.70 141.70,858.40 C143.68,861.10 145.85,863.05 148.20,863.80 C150.55,864.55 153.28,863.72 155.80,862.90 C158.32,862.08 160.93,860.47 163.30,858.90 C165.67,857.33 167.80,855.65 170.00,853.50 C172.20,851.35 174.25,847.88 176.50,846.00 C178.75,844.12 181.15,842.30 183.50,842.20 C185.85,842.10 188.17,843.23 190.60,845.40 C193.03,847.57 195.77,852.22 198.10,855.20 C200.43,858.18 202.70,861.60 204.60,863.30 C206.50,865.00 207.88,865.50 209.50,865.40 C211.12,865.30 212.42,865.13 214.30,862.70 C216.18,860.27 218.53,853.95 220.80,850.80 C223.07,847.65 225.73,844.42 227.90,843.80 C230.07,843.18 231.73,844.67 233.80,847.10 C235.87,849.53 238.32,855.43 240.30,858.40 C242.28,861.37 243.72,862.65 245.70,864.90 C247.68,867.15 249.85,868.83 252.20,871.90 C254.55,874.97 257.55,880.35 259.80,883.30 C262.05,886.25 263.90,889.42 265.70,889.60 C267.50,889.78 269.07,887.80 270.60,884.40 C272.13,881.00 273.45,874.18 274.90,869.20 C276.35,864.22 277.93,859.30 279.30,854.50 C280.67,849.70 281.83,844.00 283.10,840.40 C284.37,836.80 285.55,834.97 286.90,832.90 C288.25,830.83 289.40,829.63 291.20,828.00 C293.00,826.37 295.53,825.17 297.70,823.10 C299.87,821.03 301.95,817.62 304.20,815.60 C306.45,813.58 309.03,811.18 311.20,811.00 C313.37,810.82 315.30,812.83 317.20,814.50 C319.10,816.17 320.88,819.47 322.60,821.00 C324.32,822.53 325.70,823.88 327.50,823.70 C329.30,823.52 331.07,821.35 333.40,819.90 C335.73,818.45 338.97,815.18 341.50,815.00 C344.03,814.82 346.35,816.37 348.60,818.80 C350.85,821.23 352.85,825.45 355.00,829.60 C357.15,833.75 359.33,839.37 361.50,843.70 C363.67,848.03 365.83,852.82 368.00,855.60 C370.17,858.38 372.50,859.48 374.50,860.40 C376.50,861.32 378.00,860.72 380.00,861.10 C382.00,861.48 384.15,861.43 386.50,862.70 C388.85,863.97 391.58,866.45 394.10,868.70 C396.62,870.95 399.45,873.95 401.60,876.20 C403.75,878.45 405.20,880.75 407.00,882.20 C408.80,883.65 410.42,884.82 412.40,884.90 C414.38,884.98 416.55,883.78 418.90,882.70 C421.25,881.62 424.15,879.30 426.50,878.40 C428.85,877.50 430.92,878.02 433.00,877.30 C435.08,876.58 437.02,876.43 439.00,874.10 C440.98,871.77 443.02,866.82 444.90,863.30 C446.78,859.78 448.77,855.17 450.30,853.00 C451.83,850.83 452.83,850.30 454.10,850.30 C455.37,850.30 456.37,850.48 457.90,853.00 C459.43,855.52 461.13,860.72 463.30,865.40 C465.47,870.08 468.92,878.93 470.90,881.10 C472.88,883.27 473.77,881.02 475.20,878.40 C476.63,875.78 478.07,869.82 479.50,865.40 C480.93,860.98 482.88,854.80 483.80,851.90 C484.72,849.00 484.80,848.65 485.00,848.00" transform="translate(0.4,-0.5)" fill="none" stroke="#f00" stroke-width="2.6"/><path d="M68.50,845.50 C68.62,845.58 67.82,844.22 69.20,846.00 C70.58,847.78 74.45,853.32 76.80,856.20 C79.15,859.08 81.13,861.45 83.30,863.30 C85.47,865.15 87.63,866.37 89.80,867.30 C91.97,868.23 94.23,868.52 96.30,868.90 C98.37,869.28 100.32,869.82 102.20,869.60 C104.08,869.38 105.88,869.10 107.60,867.60 C109.32,866.10 110.78,863.93 112.50,860.60 C114.22,857.27 116.18,851.30 117.90,847.60 C119.62,843.90 121.35,840.47 122.80,838.40 C124.25,836.33 125.25,835.28 126.60,835.20 C127.95,835.12 129.28,835.83 130.90,837.90 C132.52,839.97 134.50,844.18 136.30,847.60 C138.10,851.02 139.72,855.70 141.70,858.40 C143.68,861.10 145.85,863.05 148.20,863.80 C150.55,864.55 153.28,863.72 155.80,862.90 C158.32,862.08 160.93,860.47 163.30,858.90 C165.67,857.33 167.80,855.65 170.00,853.50 C172.20,851.35 174.25,847.88 176.50,846.00 C178.75,844.12 181.15,842.30 183.50,842.20 C185.85,842.10 188.17,843.23 190.60,845.40 C193.03,847.57 195.77,852.22 198.10,855.20 C200.43,858.18 202.70,861.60 204.60,863.30 C206.50,865.00 207.88,865.50 209.50,865.40 C211.12,865.30 212.42,865.13 214.30,862.70 C216.18,860.27 218.53,853.95 220.80,850.80 C223.07,847.65 225.73,844.42 227.90,843.80 C230.07,843.18 231.73,844.67 233.80,847.10 C235.87,849.53 238.32,855.43 240.30,858.40 C242.28,861.37 243.72,862.65 245.70,864.90 C247.68,867.15 249.85,868.83 252.20,871.90 C254.55,874.97 257.55,880.35 259.80,883.30 C262.05,886.25 263.90,889.42 265.70,889.60 C267.50,889.78 269.07,887.80 270.60,884.40 C272.13,881.00 273.45,874.18 274.90,869.20 C276.35,864.22 277.93,859.30 279.30,854.50 C280.67,849.70 281.83,844.00 283.10,840.40 C284.37,836.80 285.55,834.97 286.90,832.90 C288.25,830.83 289.40,829.63 291.20,828.00 C293.00,826.37 295.53,825.17 297.70,823.10 C299.87,821.03 301.95,817.62 304.20,815.60 C306.45,813.58 309.03,811.18 311.20,811.00 C313.37,810.82 315.30,812.83 317.20,814.50 C319.10,816.17 320.88,819.47 322.60,821.00 C324.32,822.53 325.70,823.88 327.50,823.70 C329.30,823.52 331.07,821.35 333.40,819.90 C335.73,818.45 338.97,815.18 341.50,815.00 C344.03,814.82 346.35,816.37 348.60,818.80 C350.85,821.23 352.85,825.45 355.00,829.60 C357.15,833.75 359.33,839.37 361.50,843.70 C363.67,848.03 365.83,852.82 368.00,855.60 C370.17,858.38 372.50,859.48 374.50,860.40 C376.50,861.32 378.00,860.72 380.00,861.10 C382.00,861.48 384.15,861.43 386.50,862.70 C388.85,863.97 391.58,866.45 394.10,868.70 C396.62,870.95 399.45,873.95 401.60,876.20 C403.75,878.45 405.20,880.75 407.00,882.20 C408.80,883.65 410.42,884.82 412.40,884.90 C414.38,884.98 416.55,883.78 418.90,882.70 C421.25,881.62 424.15,879.30 426.50,878.40 C428.85,877.50 430.92,878.02 433.00,877.30 C435.08,876.58 437.02,876.43 439.00,874.10 C440.98,871.77 443.02,866.82 444.90,863.30 C446.78,859.78 448.77,855.17 450.30,853.00 C451.83,850.83 452.83,850.30 454.10,850.30 C455.37,850.30 456.37,850.48 457.90,853.00 C459.43,855.52 461.13,860.72 463.30,865.40 C465.47,870.08 468.92,878.93 470.90,881.10 C472.88,883.27 473.77,881.02 475.20,878.40 C476.63,875.78 478.07,869.82 479.50,865.40 C480.93,860.98 482.88,854.80 483.80,851.90 C484.72,849.00 484.80,848.65 485.00,848.00" fill="none" stroke="#00f" stroke-width="2.6"/></g><rect x="68" y="784" width="417" height="134" fill="none" stroke="#444" stroke-width="2"/></svg><div style="position:absolute;left:10px;width:53px;top:776px;text-align:right;font:12px/16px 'Liberation Sans', sans-serif;color:#545454;letter-spacing:0.15px">200</div><div style="position:absolute;left:10px;width:53px;top:810px;text-align:right;font:12px/16px 'Liberation Sans', sans-serif;color:#545454;letter-spacing:0.15px">150</div><div style="position:absolute;left:10px;width:53px;top:843px;text-align:right;font:12px/16px 'Liberation Sans', sans-serif;color:#545454;letter-spacing:0.15px">100</div><div style="position:absolute;left:10px;width:53px;top:876px;text-align:right;font:12px/16px 'Liberation Sans', sans-serif;color:#545454;letter-spacing:0.15px">50</div><div style="position:absolute;left:10px;width:53px;top:909px;text-align:right;font:12px/16px 'Liberation Sans', sans-serif;color:#545454;letter-spacing:0.15px">Mbps</div><div class="abs" style="left:522px;top:755px;font:14px/20px 'Liberation Sans', sans-serif;color:#333">Data Distribution</div><div class="abs" style="left:633px;top:764px;width:0;height:0;border-left:4.0px solid transparent;border-right:4.0px solid transparent;border-top:4px solid #333"></div><div class="abs" style="left:522px;top:775px;width:460px;height:1px;background:#eee"></div><div class="abs" style="left:522px;top:776px;font:14px/20px 'Liberation Sans', sans-serif;color:#333">TX</div><div class="abs" style="left:752px;top:776px;font:14px/20px 'Liberation Sans', sans-serif;color:#333">RX</div><div class="abs" style="left:857px;top:750px;width:119px;height:20px;border:1px solid #ccc;border-radius:3px;font:12px/20px 'Liberation Sans', sans-serif;color:#333;overflow:hidden"><div style="position:absolute;left:0;top:0;width:46px;height:20px;background:#e0e0e0;box-shadow:inset 0 2px 3px rgba(0,0,0,.12);text-align:center">30 sec</div><div style="position:absolute;left:46px;top:0;width:40px;height:20px;border-left:1px solid #ccc;text-align:center">5 min</div><div style="position:absolute;left:87px;top:0;width:32px;height:20px;border-left:1px solid #ccc;text-align:center">1 hr</div></div><svg style="position:absolute;left:0;top:0" width="1017" height="954"><path d="M631.8,855.7 L631.80,780.50 A75.2,75.2 0 0,1 672.43,792.42 Z" fill="#edc240" stroke="#fff" stroke-width="1.2" stroke-linejoin="round"/><path d="M631.8,855.7 L672.43,792.42 A75.2,75.2 0 0,1 666.41,922.46 Z" fill="#afd8f8" stroke="#fff" stroke-width="1.2" stroke-linejoin="round"/><path d="M631.8,855.7 L666.41,922.46 A75.2,75.2 0 0,1 664.06,923.63 Z" fill="#9440ed" stroke="#fff" stroke-width="1.2" stroke-linejoin="round"/><path d="M631.8,855.7 L664.06,923.63 A75.2,75.2 0 0,1 662.63,924.29 Z" fill="#fff" stroke="#fff" stroke-width="1.2" stroke-linejoin="round"/><path d="M631.8,855.7 L662.63,924.29 A75.2,75.2 0 0,1 660.94,925.02 Z" fill="#fff" stroke="#fff" stroke-width="1.2" stroke-linejoin="round"/><path d="M631.8,855.7 L660.94,925.02 A75.2,75.2 0 0,1 648.59,929.00 Z" fill="#698194" stroke="#fff" stroke-width="1.2" stroke-linejoin="round"/><path d="M631.8,855.7 L648.59,929.00 A75.2,75.2 0 0,1 641.36,930.29 Z" fill="#7a2d2d" stroke="#fff" stroke-width="1.2" stroke-linejoin="round"/><path d="M631.8,855.7 L641.36,930.29 A75.2,75.2 0 0,1 634.16,930.86 Z" fill="#2e642e" stroke="#fff" stroke-width="1.2" stroke-linejoin="round"/><path d="M631.8,855.7 L634.16,930.86 A75.2,75.2 0 0,1 632.06,930.90 Z" fill="#fff" stroke="#fff" stroke-width="1.2" stroke-linejoin="round"/><path d="M631.8,855.7 L632.06,930.90 A75.2,75.2 0 0,1 628.13,930.81 Z" fill="#6bea6b" stroke="#fff" stroke-width="1.2" stroke-linejoin="round"/><path d="M631.8,855.7 L628.13,930.81 A75.2,75.2 0 0,1 594.54,790.38 Z" fill="#cf59ff" stroke="#fff" stroke-width="1.2" stroke-linejoin="round"/><path d="M631.8,855.7 L594.54,790.38 A75.2,75.2 0 0,1 631.80,780.50 Z" fill="#5f4d1a" stroke="#fff" stroke-width="1.2" stroke-linejoin="round"/><path d="M861.5,855.7 L861.50,780.50 A75.2,75.2 0 0,1 905.70,916.54 Z" fill="#edc240" stroke="#fff" stroke-width="1.2" stroke-linejoin="round"/><path d="M861.5,855.7 L905.70,916.54 A75.2,75.2 0 0,1 871.32,930.26 Z" fill="#afd8f8" stroke="#fff" stroke-width="1.2" stroke-linejoin="round"/><path d="M861.5,855.7 L871.32,930.26 A75.2,75.2 0 0,1 869.36,930.49 Z" fill="#bd9b33" stroke="#fff" stroke-width="1.2" stroke-linejoin="round"/><path d="M861.5,855.7 L869.36,930.49 A75.2,75.2 0 0,1 866.09,930.76 Z" fill="#fff" stroke="#fff" stroke-width="1.2" stroke-linejoin="round"/><path d="M861.5,855.7 L866.09,930.76 A75.2,75.2 0 0,1 863.07,930.88 Z" fill="#fff" stroke="#fff" stroke-width="1.2" stroke-linejoin="round"/><path d="M861.5,855.7 L863.07,930.88 A75.2,75.2 0 0,1 793.91,888.67 Z" fill="#6bea6b" stroke="#fff" stroke-width="1.2" stroke-linejoin="round"/><path d="M861.5,855.7 L793.91,888.67 A75.2,75.2 0 0,1 794.32,821.91 Z" fill="#cf59ff" stroke="#fff" stroke-width="1.2" stroke-linejoin="round"/><path d="M861.5,855.7 L794.32,821.91 A75.2,75.2 0 0,1 861.50,780.50 Z" fill="#5f4d1a" stroke="#fff" stroke-width="1.2" stroke-linejoin="round"/></svg><div style="position:absolute;left:642.7px;width:80px;top:842.8px;text-align:center;font:11px/15px 'Liberation Sans', sans-serif;color:#fff;letter-spacing:0.1px">Port 2</div><div style="position:absolute;left:642.7px;width:80px;top:857.5px;text-align:center;font:11px/15px 'Liberation Sans', sans-serif;color:#fff;letter-spacing:0.1px">33%</div><div style="position:absolute;left:543.5px;width:80px;top:852.6px;text-align:center;font:11px/15px 'Liberation Sans', sans-serif;color:#fff;letter-spacing:0.1px">Port 25</div><div style="position:absolute;left:543.9px;width:80px;top:867.4px;text-align:center;font:11px/15px 'Liberation Sans', sans-serif;color:#fff;letter-spacing:0.1px">41%</div><div style="position:absolute;left:870.4px;width:80px;top:826.6px;text-align:center;font:11px/15px 'Liberation Sans', sans-serif;color:#fff;letter-spacing:0.1px">Port 1</div><div style="position:absolute;left:870.8px;width:80px;top:841.4px;text-align:center;font:11px/15px 'Liberation Sans', sans-serif;color:#fff;letter-spacing:0.1px">40%</div><div style="position:absolute;left:796.5px;width:80px;top:798.4px;text-align:center;font:11px/15px 'Liberation Sans', sans-serif;color:#fff;letter-spacing:0.1px">Port 26</div><div style="position:absolute;left:796.5px;width:80px;top:813.1px;text-align:center;font:11px/15px 'Liberation Sans', sans-serif;color:#fff;letter-spacing:0.1px">18%</div><div style="position:absolute;left:772.5px;width:80px;top:840.1px;text-align:center;font:11px/15px 'Liberation Sans', sans-serif;color:#fff;letter-spacing:0.1px">Port 25</div><div style="position:absolute;left:773.0px;width:80px;top:854.9px;text-align:center;font:11px/15px 'Liberation Sans', sans-serif;color:#fff;letter-spacing:0.1px">15%</div><div style="position:absolute;left:796.5px;width:80px;top:884.4px;text-align:center;font:11px/15px 'Liberation Sans', sans-serif;color:#fff;letter-spacing:0.1px">Port 24</div><div style="position:absolute;left:796.5px;width:80px;top:899.1px;text-align:center;font:11px/15px 'Liberation Sans', sans-serif;color:#fff;letter-spacing:0.1px">18%</div><div class="abs" style="left:12px;top:938px;font:12px/16px 'Liberation Sans', sans-serif;color:#333;letter-spacing:0.15px">Copyright &copy; 2014 Netonix</div></body></html>
